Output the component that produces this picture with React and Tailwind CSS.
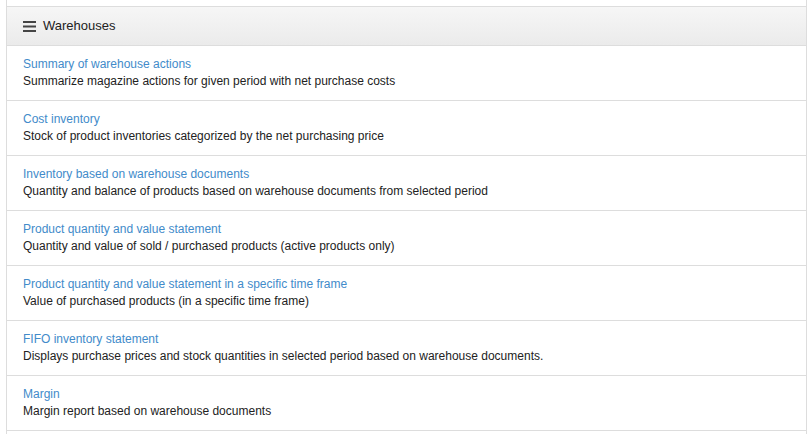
const reports = [
  {
    title: 'Summary of warehouse actions',
    desc: 'Summarize magazine actions for given period with net purchase costs',
  },
  {
    title: 'Cost inventory',
    desc: 'Stock of product inventories categorized by the net purchasing price',
  },
  {
    title: 'Inventory based on warehouse documents',
    desc: 'Quantity and balance of products based on warehouse documents from selected period',
  },
  {
    title: 'Product quantity and value statement',
    desc: 'Quantity and value of sold / purchased products (active products only)',
  },
  {
    title: 'Product quantity and value statement in a specific time frame',
    desc: 'Value of purchased products (in a specific time frame)',
  },
  {
    title: 'FIFO inventory statement',
    desc: 'Displays purchase prices and stock quantities in selected period based on warehouse documents.',
  },
  {
    title: 'Margin',
    desc: 'Margin report based on warehouse documents',
  },
];

const App = () => {
  return (
    <div className="min-h-screen bg-white pl-[6px] pr-[5px] font-['Liberation_Sans',Arial,sans-serif] text-[12px] text-[#333]">
      <div className="h-[6px] border-x border-[#dddddd]"></div>
      {/* Panel */}
      <div className="border-x border-t border-[#dddddd]">
        {/* Header */}
        <div className="flex h-[39px] items-center gap-[7px] border-b border-[#dddddd] bg-gradient-to-b from-[#f6f6f6] to-[#ebebeb] pl-[16px]">
          <svg width="13" height="11" viewBox="0 0 13 11" className="shrink-0">
            <rect x="0" y="0" width="13" height="2" fill="#444" />
            <rect x="0" y="4.5" width="13" height="2" fill="#444" />
            <rect x="0" y="9" width="13" height="2" fill="#444" />
          </svg>
          <span className="text-[13px] text-[#222]">Warehouses</span>
        </div>
        {/* Report list */}
        {reports.map((r) => (
          <div key={r.title} className="border-b border-[#dddddd] px-[16px] py-[10px] leading-[17px]">
            <a href="#" className="block text-[#428bca]">
              {r.title}
            </a>
            <div className="text-[#222]">{r.desc}</div>
          </div>
        ))}
        <div className="h-[8px]"></div>
      </div>
    </div>
  );
};

export default App;
